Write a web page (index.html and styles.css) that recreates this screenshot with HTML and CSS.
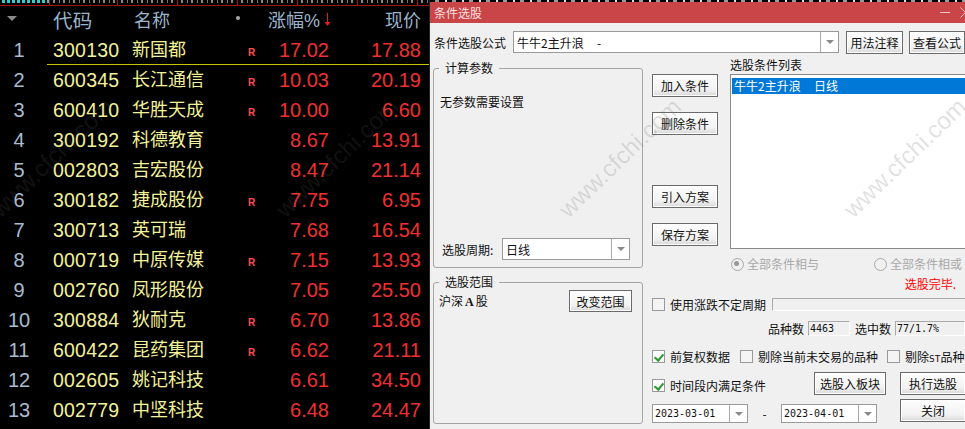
FILE: index.html
```html
<!DOCTYPE html>
<html lang="zh">
<head>
<meta charset="utf-8">
<title>条件选股</title>
<link rel="stylesheet" href="styles.css">
</head>
<body>
<div class="screen">
  <section class="quotes">
    <div class="strip">
      <span></span><span></span><span></span><span></span><span></span><span></span><span></span><span></span>
    </div>
    <div class="row head">
      <span class="num"><i class="sort"></i></span><span class="code">代码</span><span class="name">名称</span><span class="flag"><i class="dot"></i></span><span class="pct">涨幅%<svg class="arrow" width="7" height="14" viewBox="0 0 7 14"><path d="M3.5 0V12" stroke="#e02020" fill="none"/><path d="M0.5 9H6.5L3.5 13Z" fill="#e02020"/></svg></span><span class="price">现价</span>
    </div>
    <div class="row sel"><span class="num">1</span><span class="code">300130</span><span class="name">新国都</span><span class="flag">R</span><span class="pct">17.02</span><span class="price">17.88</span></div>
    <div class="row"><span class="num">2</span><span class="code">600345</span><span class="name">长江通信</span><span class="flag">R</span><span class="pct">10.03</span><span class="price">20.19</span></div>
    <div class="row"><span class="num">3</span><span class="code">600410</span><span class="name">华胜天成</span><span class="flag">R</span><span class="pct">10.00</span><span class="price">6.60</span></div>
    <div class="row"><span class="num">4</span><span class="code">300192</span><span class="name">科德教育</span><span class="flag"></span><span class="pct">8.67</span><span class="price">13.91</span></div>
    <div class="row"><span class="num">5</span><span class="code">002803</span><span class="name">吉宏股份</span><span class="flag"></span><span class="pct">8.47</span><span class="price">21.14</span></div>
    <div class="row"><span class="num">6</span><span class="code">300182</span><span class="name">捷成股份</span><span class="flag">R</span><span class="pct">7.75</span><span class="price">6.95</span></div>
    <div class="row"><span class="num">7</span><span class="code">300713</span><span class="name">英可瑞</span><span class="flag"></span><span class="pct">7.68</span><span class="price">16.54</span></div>
    <div class="row"><span class="num">8</span><span class="code">000719</span><span class="name">中原传媒</span><span class="flag">R</span><span class="pct">7.15</span><span class="price">13.93</span></div>
    <div class="row"><span class="num">9</span><span class="code">002760</span><span class="name">凤形股份</span><span class="flag"></span><span class="pct">7.05</span><span class="price">25.50</span></div>
    <div class="row"><span class="num">10</span><span class="code">300884</span><span class="name">狄耐克</span><span class="flag">R</span><span class="pct">6.70</span><span class="price">13.86</span></div>
    <div class="row"><span class="num">11</span><span class="code">600422</span><span class="name">昆药集团</span><span class="flag">R</span><span class="pct">6.62</span><span class="price">21.11</span></div>
    <div class="row"><span class="num">12</span><span class="code">002605</span><span class="name">姚记科技</span><span class="flag"></span><span class="pct">6.61</span><span class="price">34.50</span></div>
    <div class="row"><span class="num">13</span><span class="code">002779</span><span class="name">中坚科技</span><span class="flag"></span><span class="pct">6.48</span><span class="price">24.47</span></div>
    <span class="wm wm-a">www.cfchi.com</span>
    <span class="wm wm-b">www.cfchi.com</span>
  </section>

  <section class="dialog">
    <div class="dstrip"></div>
    <header class="titlebar"><span>条件选股</span><span class="winbtns"><i class="min"></i><svg class="close-x" width="11" height="11" viewBox="0 0 11 11"><path d="M0.5 0.5L10.5 10.5M10.5 0.5L0.5 10.5" stroke="#eec8c8" fill="none"/></svg></span></header>
    <div class="formula">
      <label>条件选股公式</label>
      <div class="combo wide"><span class="val">牛牛2主升浪&nbsp;&nbsp;&nbsp;&nbsp; -</span><i class="drop"></i></div>
      <button class="btn b-note">用法注释</button>
      <button class="btn b-view">查看公式</button>
    </div>
    <div class="body">
      <div class="left">
        <fieldset class="group params">
          <legend>计算参数</legend>
          <p class="noparam">无参数需要设置</p>
          <div class="period"><label>选股周期:</label><div class="combo short"><span class="val">日线</span><i class="drop"></i></div></div>
        </fieldset>
        <fieldset class="group scope">
          <legend>选股范围</legend>
          <div class="scope-row"><span>沪深<b class="serif-a">A</b>股</span><button class="btn b-range">改变范围</button></div>
        </fieldset>
      </div>
      <div class="right">
        <div class="upper">
          <div class="actions">
            <button class="btn b-act">加入条件</button>
            <button class="btn b-act">删除条件</button>
            <button class="btn b-act gap">引入方案</button>
            <button class="btn b-act">保存方案</button>
          </div>
          <div class="listwrap">
            <div class="listlabel">选股条件列表</div>
            <div class="list"><div class="item">牛牛2主升浪&nbsp;&nbsp;&nbsp;&nbsp; 日线</div></div>
          </div>
        </div>
        <div class="radios">
          <span class="radio on">全部条件相与</span>
          <span class="radio">全部条件相或</span>
        </div>
        <div class="done">选股完毕.</div>
        <div class="varperiod"><span class="check"></span><span>使用涨跌不定周期</span><span class="inset"></span></div>
        <div class="stats"><span>品种数</span><span class="stat s1">4463</span><span>选中数</span><span class="stat s2">77/1.7%</span></div>
        <div class="opts">
          <span class="opt"><i class="check on"></i>前复权数据</span>
          <span class="opt"><i class="check"></i>剔除当前未交易的品种</span>
          <span class="opt"><i class="check"></i><span>剔除<span class="mono-st">ST</span>品种</span></span>
        </div>
        <div class="foot">
          <div class="foot-left">
            <span class="opt"><i class="check on"></i>时间段内满足条件</span>
            <div class="dates">
              <div class="combo date"><span class="val">2023-03-01</span><i class="drop"></i></div>
              <span class="dash">-</span>
              <div class="combo date"><span class="val">2023-04-01</span><i class="drop"></i></div>
            </div>
          </div>
          <button class="btn b-board">选股入板块</button>
          <div class="foot-btns">
            <button class="btn b-run">执行选股</button>
            <button class="btn b-run">关闭</button>
          </div>
        </div>
      </div>
    </div>
    <span class="wm wm-c">www.cfchi.com</span>
    <span class="wm wm-d">www.cfchi.com</span>
  </section>
</div>
</body>
</html>
```
FILE: styles.css
```css
* { box-sizing: border-box; }
html, body { margin: 0; padding: 0; background: #000; }
body { font-family: "Liberation Sans", "Noto Sans CJK SC", sans-serif; }
.screen { display: flex; width: 965px; height: 429px; overflow: hidden; }

/* quotes table */
.quotes { position: relative; width: 430px; height: 429px; background: #000; border-right: 1px solid #222; overflow: hidden; flex: none; }
.strip { display: flex; height: 6px; border-bottom: 1px solid #a01414; }
.strip span { flex: none; width: 60px; height: 5px; border-right: 1px solid #a01414; background: repeating-linear-gradient(90deg, #000 0 3px, #888 3px 5px, #000 5px 9px, #777 9px 10px); background-size: 100% 3px; background-repeat: no-repeat; }
.strip span:first-child { width: 50px; background-image: repeating-linear-gradient(90deg, #000 0 2px, #3cc 2px 5px); }
.strip span:nth-child(2) { width: 68px; }
.row { position: relative; display: grid; grid-template-columns: 47px 84px 112px 26px 60px 92px; height: 30px; align-items: center; font-size: 20px; line-height: 30px; color: #f03030; white-space: nowrap; }
.head { height: 29px; color: #9ab4cc; }
.head .code { color: #9ab4cc; }
.head .name { color: #9ab4cc; padding-left: 3px; }
.num { text-align: center; padding-right: 9px; color: #a9bcd0; font-size: 20px; }
.head .num { text-align: left; padding: 0 0 0 7px; line-height: 1; }
.code { color: #f2f29a; padding-left: 6px; font-size: 19.5px; letter-spacing: .2px; }
.name { color: #f2f29a; font-size: 18px; padding-left: 1px; }
.flag { font-size: 10px; line-height: 10px; font-weight: 700; color: #ff4d4d; position: relative; top: 3px; padding-left: 5px; }
.pct { text-align: right; margin-left: -30px; }
.price { text-align: right; }
.head .pct { margin-left: -40px; margin-right: -2px; font-size: 18px; }
.head .price { font-size: 18px; }
.arrow { margin-left: 4px; vertical-align: 0; }
.sort { display: block; width: 0; height: 0; border: 5px solid transparent; border-top: 5px solid #8a8a8a; border-bottom: 0; margin-bottom: 5px; }
.dot { display: block; width: 4px; height: 4px; border-radius: 50%; background: #aaa; margin: 0 0 13px -12px; }
.sel::after { content: ""; position: absolute; left: 47px; right: 0; bottom: 0; height: 1px; background: #c9c400; }
.wm { position: absolute; top: 158px; font-family: "Liberation Sans", sans-serif; font-size: 24px; line-height: 1; color: rgba(128,128,128,.15); transform: translate(-50%, -50%) rotate(-44deg); white-space: nowrap; pointer-events: none; }
.wm-a { left: 52px; }
.wm-b { left: 337px; }
.wm-c { left: 190px; color: rgba(120,120,120,.22); }
.wm-d { left: 475px; color: rgba(120,120,120,.22); }

/* dialog */
.dialog { position: relative; flex: 1; background: #f0f0f0; color: #111; font-size: 12px; overflow: hidden; font-family: "Noto Sans CJK SC", sans-serif; }
.dstrip { height: 2px; background: repeating-linear-gradient(90deg, #000 0 5px, #999 5px 9px, #000 9px 15px, #ddd 15px 17px); }
.titlebar { display: flex; justify-content: space-between; align-items: center; height: 21px; padding: 0 0 0 4px; background: #c94548; color: #f6e0e0; font-size: 12px; overflow: hidden; }
.winbtns { display: flex; align-items: center; gap: 10px; margin-right: -6px; flex: none; }
.min { display: block; width: 10px; height: 1px; background: #eec8c8; }
.close-x { display: block; }
.formula { display: flex; align-items: center; padding: 8px 0 0 4px; height: 30px; }
.formula label { width: 80px; font-size: 12px; }
.combo { display: flex; height: 22px; border: 1px solid #9a9a9a; background: #fff; align-items: center; flex: none; }
.combo .val { flex: 1; padding-left: 3px; font-size: 12px; white-space: nowrap; overflow: hidden; }
.drop { position: relative; width: 18px; height: 100%; border-left: 1px solid #aaa; display: flex; align-items: center; justify-content: center; background: #fff; flex: none; }
.drop::after { content: ""; border: 4px solid transparent; border-top: 4px solid #8a8a8a; border-bottom: 0; }
.wide { width: 326px; }
.btn { display: inline-flex; align-items: center; justify-content: center; padding: 0; font: inherit; font-size: 12px; color: #111; border: 1px solid #6a6a6a; background: linear-gradient(#fdfdfd, #f2f2f2 70%, #d8d8d8); box-shadow: inset 0 0 0 1px #fff; white-space: nowrap; flex: none; }
.b-note { width: 57px; height: 23px; margin-left: 7px; }
.b-view { width: 56px; height: 23px; margin-left: 6px; }
.body { display: flex; padding: 8px 0 0 3px; }
.left { width: 210px; flex: none; }
.group { margin: 0; padding: 0; border: 1px solid #a5a5a5; border-radius: 3px; min-width: 0; }
.group legend { padding: 0 6px; margin-left: 5px; font-size: 12px; line-height: 14px; }
.params { height: 207px; }
.noparam { margin: 18px 0 0 6px; font-size: 12px; line-height: 17px; }
.period { display: flex; align-items: center; margin: 128px 0 0 8px; }
.period label { width: 60px; }
.short { width: 128px; height: 22px; }
.scope { height: 149px; margin-top: 7px; }
.scope-row { display: flex; justify-content: space-between; align-items: center; padding: 1px 10px 0 5px; }
.serif-a { font-family: "Liberation Serif", serif; font-size: 12px; margin: 0 2px; }
.b-range { width: 63px; height: 22px; }
.right { flex: 1; padding-left: 9px; min-width: 0; }
.upper { display: flex; height: 192px; }
.actions { width: 69px; flex: none; display: flex; flex-direction: column; padding-top: 13px; }
.b-act { width: 66px; height: 23px; margin-bottom: 15px; }
.b-act.gap { margin-top: 35px; }
.listwrap { flex: 1; margin-left: 9px; min-width: 0; }
.listlabel { line-height: 16px; margin-top: -4px; margin-bottom: 1px; }
.list { height: 175px; border: 1px solid #8a8a8a; border-right: 0; background: #fff; padding: 3px 0 0 1px; width: 240px; }
.item { height: 16px; line-height: 16px; background: #0078d7; color: #fff; padding-left: 2px; white-space: nowrap; }
.radios { display: flex; padding-left: 79px; color: #a8a8a8; height: 20px; align-items: center; }
.radio { position: relative; width: 143px; padding-left: 16px; white-space: nowrap; flex: none; }
.radio::before { content: ""; position: absolute; left: 0; top: 3px; width: 11px; height: 11px; border-radius: 50%; border: 1px solid #aaa; background: #f0f0f0; }
.radio.on::after { content: ""; position: absolute; left: 3px; top: 6px; width: 5px; height: 5px; border-radius: 50%; background: #999; }
.done { color: #f00; text-align: right; padding-right: 9px; height: 17px; line-height: 17px; margin-top: 2px; white-space: nowrap; }
.varperiod { display: flex; align-items: center; gap: 5px; height: 15px; margin-top: 5px; white-space: nowrap; }
.check { display: inline-block; position: relative; width: 13px; height: 13px; border: 1px solid #999; background: #f4f4f4; flex: none; }
.check.on { background: #fff; }
.check.on::after { content: ""; position: absolute; left: 3px; top: 1px; width: 4px; height: 7px; border: solid #2a9a2a; border-width: 0 2px 2px 0; transform: rotate(40deg); }
.inset { flex: 1; height: 13px; border: 1px solid #aaa; border-right: 0; border-bottom: 1px solid #fff; margin-left: 1px; }
.stats { display: flex; align-items: center; justify-content: flex-end; gap: 4px; margin-top: 8px; height: 16px; white-space: nowrap; }
.stat { height: 15px; line-height: 13px; border: 1px solid #aaa; border-right-color: #fff; border-bottom-color: #fff; font-family: "DejaVu Sans Mono", monospace; font-size: 10px; padding-left: 1px; }
.s1 { width: 42px; margin-right: 1px; }
.s2 { width: 70px; }
.opts { display: flex; gap: 10px; margin-top: 12px; height: 17px; align-items: center; white-space: nowrap; }
.opts .opt:nth-child(3) { margin-left: -1px; }
.mono-st { font-family: "DejaVu Sans Mono", monospace; font-size: 9.5px; }
.opt { display: inline-flex; align-items: center; gap: 5px; white-space: nowrap; }
.foot { display: flex; margin-top: 7px; align-items: flex-start; }
.foot-left { width: 162px; flex: none; padding-top: 5px; }
.dates { display: flex; align-items: center; margin-top: 9px; width: 224px; }
.date { width: 96px; height: 19px; }
.date .val { font-family: "DejaVu Sans Mono", monospace; font-size: 10px; padding-left: 2px; }
.dash { width: 33px; text-align: center; flex: none; }
.b-board { width: 72px; height: 23px; }
.foot-btns { display: flex; flex-direction: column; gap: 4px; margin-left: 14px; flex: none; }
.b-run { width: 66px; height: 23px; }
```
